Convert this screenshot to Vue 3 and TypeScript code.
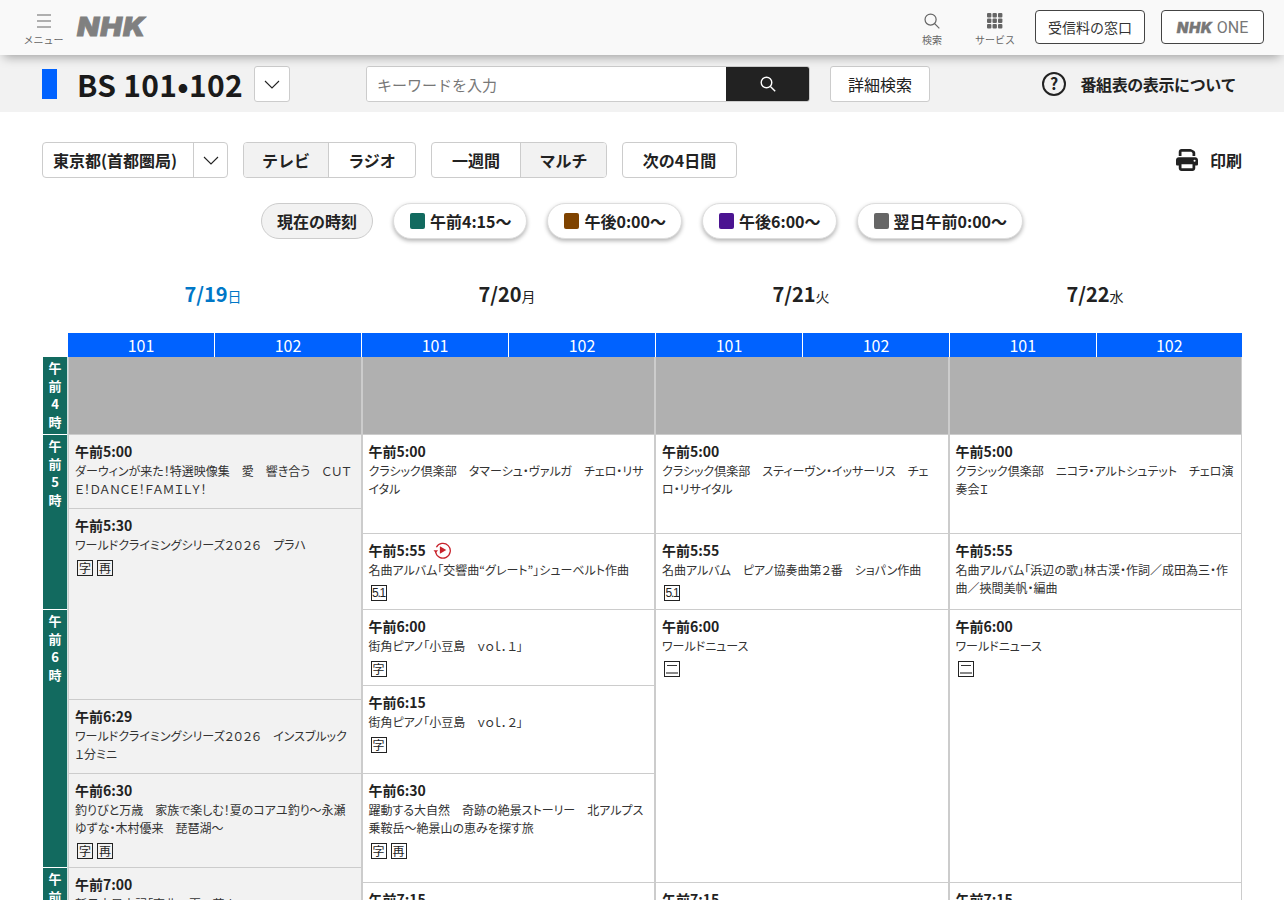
<script setup lang="ts">
interface Program {
  time: string;
  title?: string;
  height: number;
  badges?: string[];
  replay?: boolean;
}

interface Day {
  date: string;
  week: string;
  today?: boolean;
  programs: Program[];
}

const hours = [
  { label: ['午', '前', '4', '時'], height: 78 },
  { label: ['午', '前', '5', '時'], height: 175 },
  { label: ['午', '前', '6', '時'], height: 258 },
  { label: ['午', '前', '7', '時'], height: 200 },
];

const periods = [
  { label: '午前4:15〜', color: '#126a5f' },
  { label: '午後0:00〜', color: '#7f4300' },
  { label: '午後6:00〜', color: '#4b1491' },
  { label: '翌日午前0:00〜', color: '#666666' },
];

const days: Day[] = [
  {
    date: '7/19',
    week: '日',
    today: true,
    programs: [
      { time: '午前5:00', height: 74, title: 'ダーウィンが来た！特選映像集　愛　響き合う　ＣＵＴＥ！ＤＡＮＣＥ！ＦＡＭＩＬＹ！' },
      { time: '午前5:30', height: 191, title: 'ワールドクライミングシリーズ２０２６　プラハ', badges: ['字', '再'] },
      { time: '午前6:29', height: 74, title: 'ワールドクライミングシリーズ２０２６　インスブルック　１分ミニ' },
      { time: '午前6:30', height: 94, title: '釣りびと万歳　家族で楽しむ！夏のコアユ釣り〜永瀬ゆずな・木村優来　琵琶湖〜', badges: ['字', '再'] },
      { time: '午前7:00', height: 100, title: '新日本風土記「京北　夏の花火」' },
    ],
  },
  {
    date: '7/20',
    week: '月',
    programs: [
      { time: '午前5:00', height: 99, title: 'クラシック倶楽部　タマーシュ・ヴァルガ　チェロ・リサイタル' },
      { time: '午前5:55', height: 76, title: '名曲アルバム「交響曲“グレート”」シューベルト作曲', badges: ['5.1'], replay: true },
      { time: '午前6:00', height: 76, title: '街角ピアノ「小豆島　ｖｏｌ．１」', badges: ['字'] },
      { time: '午前6:15', height: 88, title: '街角ピアノ「小豆島　ｖｏｌ．２」', badges: ['字'] },
      { time: '午前6:30', height: 109, title: '躍動する大自然　奇跡の絶景ストーリー　北アルプス　乗鞍岳〜絶景山の恵みを探す旅', badges: ['字', '再'] },
      { time: '午前7:15', height: 100 },
    ],
  },
  {
    date: '7/21',
    week: '火',
    programs: [
      { time: '午前5:00', height: 99, title: 'クラシック倶楽部　スティーヴン・イッサーリス　チェロ・リサイタル' },
      { time: '午前5:55', height: 76, title: '名曲アルバム　ピアノ協奏曲第２番　ショパン作曲', badges: ['5.1'] },
      { time: '午前6:00', height: 273, title: 'ワールドニュース', badges: ['二'] },
      { time: '午前7:15', height: 100 },
    ],
  },
  {
    date: '7/22',
    week: '水',
    programs: [
      { time: '午前5:00', height: 99, title: 'クラシック倶楽部　ニコラ・アルトシュテット　チェロ演奏会Ｉ' },
      { time: '午前5:55', height: 76, title: '名曲アルバム「浜辺の歌」林古渓・作詞／成田為三・作曲／挾間美帆・編曲' },
      { time: '午前6:00', height: 273, title: 'ワールドニュース', badges: ['二'] },
      { time: '午前7:15', height: 100 },
    ],
  },
];
</script>

<template>
  <div class="page">
    <header class="global-header">
      <div class="menu-btn">
        <svg width="14" height="14" viewBox="0 0 14 14" fill="none" stroke="#666" stroke-width="1.2">
          <path d="M0 1h14M0 7h14M0 13h14" />
        </svg>
        <span>メニュー</span>
      </div>
      <span class="nhk-logo">NHK</span>
      <div class="spacer"></div>
      <div class="head-link search-link">
        <svg width="16" height="16" viewBox="0 0 17 17" fill="none" stroke="#666" stroke-width="1.3">
          <circle cx="7" cy="7" r="5.9" />
          <path d="M11.3 11.3l5 5" />
        </svg>
        <span>検索</span>
      </div>
      <div class="head-link service-link">
        <svg width="16" height="16" viewBox="0 0 16 16" fill="#666">
          <template v-for="y in [0, 5.5, 11]" :key="y">
            <rect v-for="x in [0, 5.5, 11]" :key="x" :x="x" :y="y" width="4.4" height="4.4" rx="1" />
          </template>
        </svg>
        <span>サービス</span>
      </div>
      <a class="head-btn fee-btn">受信料の窓口</a>
      <a class="head-btn one-btn"><span class="nhk-small">NHK</span><span class="one">ONE</span></a>
    </header>

    <section class="sub-header">
      <span class="channel-mark"></span>
      <h1 class="channel-name">BS 101•102</h1>
      <button class="channel-drop">
        <svg width="16" height="9" viewBox="0 0 16 9" fill="none" stroke="#222" stroke-width="1.1"><path d="M1 1l7 7 7-7" /></svg>
      </button>
      <div class="search-box">
        <input type="text" placeholder="キーワードを入力" />
        <button class="search-submit">
          <svg width="16" height="16" viewBox="0 0 16 16" fill="none" stroke="#fff" stroke-width="1.4">
            <circle cx="6.5" cy="6.5" r="5.3" />
            <path d="M10.4 10.4l4.8 4.8" />
          </svg>
        </button>
      </div>
      <button class="detail-btn">詳細検索</button>
      <div class="about">
        <svg width="24" height="24" viewBox="0 0 24 24">
          <circle cx="12" cy="12" r="11" fill="none" stroke="#222" stroke-width="2" />
          <text x="12" y="17.5" text-anchor="middle" class="about-q">?</text>
        </svg>
        <span>番組表の表示について</span>
      </div>
    </section>

    <section class="toolbar">
      <div class="area-select">
        <span class="area-name">東京都(首都圏局)</span>
        <span class="area-arrow">
          <svg width="16" height="9" viewBox="0 0 16 9" fill="none" stroke="#222" stroke-width="1.1"><path d="M1 1l7 7 7-7" /></svg>
        </span>
      </div>
      <div class="seg">
        <span class="seg-item seg-tv active">テレビ</span>
        <span class="seg-item seg-radio">ラジオ</span>
      </div>
      <div class="seg">
        <span class="seg-item seg-week">一週間</span>
        <span class="seg-item seg-multi active">マルチ</span>
      </div>
      <div class="seg">
        <span class="seg-item seg-next">次の4日間</span>
      </div>
      <div class="spacer"></div>
      <div class="print">
        <svg width="22" height="22" viewBox="0 0 512 512" fill="#222">
          <path d="M128 0c-35 0-64 29-64 64v96h64V64h227l29 29v67h64V93c0-17-7-33-19-45L374 19C362 7 346 0 329 0H128zM384 352v96H128v-96h256zm64 32h32c18 0 32-14 32-32v-96c0-35-29-64-64-64H64c-35 0-64 29-64 64v96c0 18 14 32 32 32h32v64c0 35 29 64 64 64h256c35 0 64-29 64-64v-64zm-16-136a24 24 0 1 1 0 48 24 24 0 1 1 0-48z" />
        </svg>
        <span>印刷</span>
      </div>
    </section>

    <nav class="jump">
      <span class="pill now">現在の時刻</span>
      <span v-for="p in periods" :key="p.label" class="pill">
        <i class="swatch" :style="{ background: p.color }"></i>{{ p.label }}
      </span>
    </nav>

    <section class="dates">
      <div v-for="d in days" :key="d.date" class="date col" :class="{ today: d.today }">
        <b>{{ d.date }}</b><small>{{ d.week }}</small>
      </div>
    </section>

    <section class="channels">
      <div v-for="d in days" :key="d.date" class="channel-pair col">
        <span>101</span>
        <span>102</span>
      </div>
    </section>

    <section class="schedule">
      <div class="hours">
        <div v-for="(h, i) in hours" :key="i" class="hour" :style="{ height: h.height + 'px' }">
          <span v-for="(c, j) in h.label" :key="j">{{ c }}</span>
        </div>
      </div>
      <div v-for="d in days" :key="d.date" class="day" :class="{ past: d.today }">
        <div class="closed"></div>
        <article v-for="p in d.programs" :key="p.time" class="program" :style="{ height: p.height + 'px' }">
          <div class="prog-time">
            {{ p.time }}
            <svg v-if="p.replay" class="replay" width="18" height="18" viewBox="0 0 18 18" fill="none">
              <path d="M3.4 6.2A7.4 7.4 0 1 1 2.6 11" stroke="#c8232c" stroke-width="1.3" />
              <path d="M0.5 9.2h4.6L2.8 12z" fill="#c8232c" />
              <path d="M6.9 5.2l6.4 3.8-6.4 3.8z" fill="#c8232c" />
            </svg>
          </div>
          <p v-if="p.title" class="prog-title">{{ p.title }}</p>
          <div v-if="p.badges" class="badges">
            <span v-for="b in p.badges" :key="b" class="badge" :class="{ surround: b === '5.1' }">
              <svg v-if="b === '二'" width="14" height="14" viewBox="0 0 14 14">
                <rect x="2" y="3" width="10" height="1" fill="#333" />
                <rect x="1" y="10" width="12" height="2" fill="#888" />
              </svg>
              <template v-else>{{ b }}</template>
            </span>
          </div>
        </article>
      </div>
    </section>
  </div>
</template>

<style>
html,
body {
  margin: 0;
  overflow: hidden;
  background: #fff;
}
</style>

<style scoped>
.page {
  position: relative;
  height: 900px;
  overflow: hidden;
  font-family: "Noto Sans CJK JP", "Noto Sans", sans-serif;
  color: #222;
  background: #fff;
}

.spacer {
  flex: 1;
}

button {
  font-family: inherit;
  padding: 0;
}

.global-header {
  position: relative;
  z-index: 2;
  display: flex;
  align-items: center;
  height: 55px;
  box-sizing: border-box;
  padding: 0 20px 0 24px;
  background: #f9f9f9;
  box-shadow: 0 6px 10px -4px rgba(0, 0, 0, 0.35);
}

.menu-btn,
.head-link {
  display: flex;
  flex-direction: column;
  align-items: center;
  font-size: 10px;
  line-height: 14px;
  color: #666;
  white-space: nowrap;
}

.menu-btn {
  width: 39px;
  gap: 5px;
  margin-top: 5px;
}

.nhk-logo {
  margin: -1px 0 0 14px;
  font-family: Inter, "Liberation Sans", sans-serif;
  font-size: 26px;
  font-weight: 900;
  font-style: italic;
  line-height: 1;
  letter-spacing: 1px;
  color: #808080;
  -webkit-text-stroke: 0.8px #808080;
  transform: scaleX(1.11);
  transform-origin: left center;
}

.head-link {
  gap: 4px;
  margin-top: 5px;
}

.search-link {
  margin-right: 33px;
}

.service-link {
  margin-right: 20px;
}

.head-btn {
  display: flex;
  align-items: center;
  justify-content: center;
  box-sizing: border-box;
  height: 34px;
  margin-top: -1px;
  border: 1px solid #444;
  border-radius: 4px;
  background: #fff;
  font-size: 14px;
  color: #333;
}

.fee-btn {
  width: 110px;
}

.one-btn {
  width: 103px;
  margin-left: 16px;
  gap: 4px;
}

.nhk-small {
  font-family: Inter, "Liberation Sans", sans-serif;
  font-size: 15px;
  font-weight: 900;
  font-style: italic;
  letter-spacing: 0.6px;
  color: #777;
  -webkit-text-stroke: 0.3px #777;
}

.one {
  font-family: Roboto, "Noto Sans", sans-serif;
  font-size: 16px;
  color: #777;
}

.sub-header {
  display: flex;
  align-items: center;
  height: 57px;
  box-sizing: border-box;
  padding: 1px 48px 0 42px;
  background: #f2f2f2;
}

.channel-mark {
  flex: none;
  width: 15px;
  height: 30px;
  background: #0062ff;
}

.channel-name {
  flex: none;
  width: 167px;
  margin: 0 10px 0 20px;
  font-size: 30px;
  font-weight: 700;
  line-height: 36px;
  letter-spacing: 0.3px;
  color: #1a1a1a;
  white-space: nowrap;
}

.channel-drop {
  display: flex;
  align-items: center;
  justify-content: center;
  flex: none;
  width: 36px;
  height: 36px;
  border: 1px solid #ccc;
  border-radius: 3px;
  background: #fff;
}

.search-box {
  display: flex;
  flex: none;
  width: 444px;
  height: 36px;
  margin-left: 76px;
  border: 1px solid #ccc;
  border-radius: 3px;
  box-sizing: border-box;
  overflow: hidden;
}

.search-box input {
  flex: 1;
  min-width: 0;
  border: 0;
  padding: 0 10px;
  font-family: inherit;
  font-size: 15px;
  background: #fff;
  outline: none;
}

.search-box input::placeholder {
  color: #777;
  opacity: 1;
}

.search-submit {
  display: flex;
  align-items: center;
  justify-content: center;
  width: 83px;
  border: 0;
  background: #222;
}

.detail-btn {
  flex: none;
  width: 100px;
  height: 36px;
  margin-left: 20px;
  border: 1px solid #ccc;
  border-radius: 3px;
  background: #fff;
  font-size: 16px;
  color: #222;
}

.about {
  display: flex;
  align-items: center;
  gap: 14px;
  margin-left: auto;
  font-size: 16px;
  font-weight: 700;
  letter-spacing: -0.4px;
  color: #222;
  white-space: nowrap;
}

.about-q {
  font-size: 16px;
  font-weight: 700;
  fill: #222;
}

.toolbar {
  display: flex;
  align-items: center;
  height: 36px;
  padding: 30px 42px 0;
  gap: 15px;
}

.area-select {
  display: flex;
  align-items: center;
  box-sizing: border-box;
  width: 186px;
  height: 36px;
  border: 1px solid #ccc;
  border-radius: 4px;
  font-size: 16px;
  font-weight: 700;
}

.area-name {
  flex: 1;
  padding-left: 10px;
  white-space: nowrap;
}

.area-arrow {
  display: flex;
  align-items: center;
  justify-content: center;
  width: 34px;
  height: 34px;
  border-left: 1px solid #ccc;
  box-sizing: border-box;
}

.seg {
  display: flex;
  height: 36px;
  box-sizing: border-box;
  border: 1px solid #ccc;
  border-radius: 4px;
  overflow: hidden;
}

.seg-item {
  display: flex;
  align-items: center;
  justify-content: center;
  font-size: 16px;
  font-weight: 700;
  white-space: nowrap;
}

.seg-item + .seg-item {
  border-left: 1px solid #ccc;
}

.seg-item.active {
  background: #f2f2f2;
}

.seg-tv {
  width: 84px;
}

.seg-radio {
  width: 86px;
}

.seg-week {
  width: 88px;
}

.seg-multi {
  width: 85px;
}

.seg-next {
  width: 113px;
}

.print {
  display: flex;
  align-items: center;
  gap: 12px;
  font-size: 16px;
  font-weight: 700;
}

.jump {
  display: flex;
  justify-content: center;
  gap: 20px;
  margin-top: 25px;
}

.pill {
  display: flex;
  align-items: center;
  gap: 5px;
  box-sizing: border-box;
  height: 36px;
  padding: 0 15px 0 16px;
  border: 1px solid #ddd;
  border-radius: 18px;
  background: #fff;
  box-shadow: 0 2px 4px rgba(0, 0, 0, 0.3);
  font-size: 16px;
  font-weight: 700;
  white-space: nowrap;
}

.pill.now {
  padding: 0 15px;
  border-color: #ccc;
  background: #f2f2f2;
  box-shadow: none;
}

.swatch {
  width: 15px;
  height: 16px;
  border-radius: 2px;
}

.col {
  flex: 0 0 294px;
  box-sizing: border-box;
  min-width: 0;
}

.col:last-child {
  flex-basis: 292px;
}

.dates {
  display: flex;
  height: 40px;
  margin: 35px 42px 0 68px;
}

.date {
  display: flex;
  align-items: baseline;
  justify-content: center;
  padding-right: 4px;
  line-height: 40px;
}

.date:last-child {
  padding-right: 2px;
}

.date b {
  font-size: 20px;
  font-weight: 700;
}

.date small {
  font-size: 14px;
}

.date.today {
  color: #0077c7;
}

.channels {
  display: flex;
  margin: 19px 42px 0 68px;
}

.channel-pair {
  display: flex;
  height: 24px;
  border-right: 1px solid #fff;
  background: #0062ff;
  color: #fff;
  font-size: 16px;
  line-height: 25px;
  text-align: center;
}

.channel-pair:last-child {
  border-right: 0;
}

.channel-pair span {
  flex: 1;
}

.channel-pair span + span {
  border-left: 1px solid #fff;
}

.schedule {
  display: flex;
  margin: 0 42px 0 43px;
}

.hours {
  flex: none;
  width: 24px;
  border-right: 1px solid #cfe3e0;
}

.hour {
  display: flex;
  flex-direction: column;
  align-items: center;
  box-sizing: border-box;
  padding-top: 2px;
  border-bottom: 1px solid #fff;
  background: #126a5f;
  color: #fff;
  font-size: 13px;
  font-weight: 700;
  line-height: 18px;
}

.day {
  flex: 0 0 293.5px;
  box-sizing: border-box;
  min-width: 0;
  border-right: 1px solid #ccc;
  border-left: 1px solid #ccc;
}

.closed {
  height: 78px;
  box-sizing: border-box;
  border-bottom: 1px solid #ccc;
  background: #b0b0b0;
}

.program {
  box-sizing: border-box;
  padding: 6px 6px 0;
  border-bottom: 1px solid #ccc;
  overflow: hidden;
}

.past .program {
  background: #f2f2f2;
}

.prog-time {
  display: flex;
  align-items: center;
  gap: 7px;
  font-size: 14px;
  font-weight: 700;
  line-height: 20px;
}

.prog-title {
  margin: 1px 0 0;
  font-size: 12px;
  line-height: 18px;
  font-feature-settings: "palt";
  color: #333;
  word-break: break-all;
}

.badges {
  display: flex;
  gap: 4px;
  margin: 6px 0 0 2px;
}

.badge {
  display: flex;
  align-items: center;
  justify-content: center;
  box-sizing: border-box;
  width: 16px;
  height: 16px;
  border: 1px solid #222;
  font-size: 12px;
  line-height: 14px;
}

.badge.surround {
  font-family: "Liberation Sans", sans-serif;
  font-size: 12px;
  letter-spacing: -1.2px;
}
</style>
